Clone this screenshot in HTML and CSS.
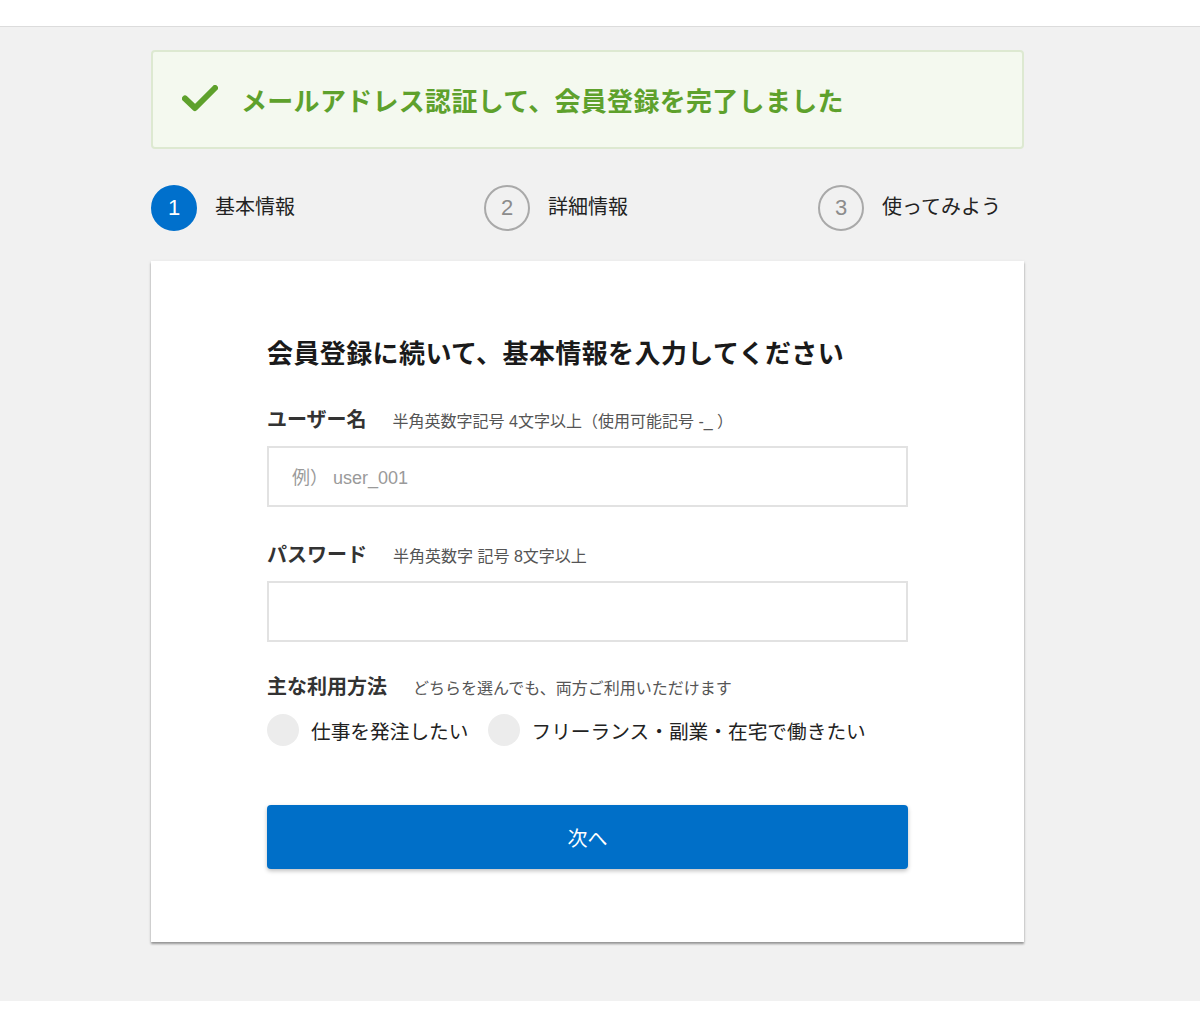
FILE: index.html
```html
<!DOCTYPE html>
<html lang="ja">
<head>
<meta charset="utf-8">
<title>基本情報</title>
<link rel="stylesheet" href="styles.css">
</head>
<body>
<header class="topbar"></header>
<main class="main">
  <div class="wrap">
    <div class="alert">
      <svg class="check" width="36" height="27" viewBox="0 0 36 27" aria-hidden="true">
        <path d="M3 13.5 L13 23 L33 3" fill="none" stroke="#5ea12c" stroke-width="6" stroke-linecap="round" stroke-linejoin="round"/>
      </svg>
      <span class="alert-text">メールアドレス認証して、会員登録を完了しました</span>
    </div>

    <ol class="steps">
      <li class="step active"><span class="num">1</span><span class="step-label">基本情報</span></li>
      <li class="step"><span class="num">2</span><span class="step-label">詳細情報</span></li>
      <li class="step"><span class="num">3</span><span class="step-label">使ってみよう</span></li>
    </ol>

    <section class="card">
      <div class="form">
        <h1 class="title">会員登録に続いて、基本情報を入力してください</h1>

        <div class="field-head first">
          <span class="label">ユーザー名</span>
          <span class="hint">半角英数字記号 4文字以上（使用可能記号 -_ ）</span>
        </div>
        <div class="input"><span class="placeholder">例） user_001</span></div>

        <div class="field-head">
          <span class="label">パスワード</span>
          <span class="hint">半角英数字 記号 8文字以上</span>
        </div>
        <div class="input"></div>

        <div class="field-head third">
          <span class="label">主な利用方法</span>
          <span class="hint">どちらを選んでも、両方ご利用いただけます</span>
        </div>
        <div class="radios">
          <label class="radio"><span class="dot"></span><span>仕事を発注したい</span></label>
          <label class="radio"><span class="dot"></span><span>フリーランス・副業・在宅で働きたい</span></label>
        </div>

        <button class="btn" type="button">次へ</button>
      </div>
    </section>
  </div>
</main>
</body>
</html>
```

FILE: styles.css
```css
* { box-sizing: border-box; }

html, body {
  margin: 0;
  padding: 0;
  background: #fff;
  font-family: "Liberation Sans", "Noto Sans CJK JP", sans-serif;
  color: #333;
}

.topbar {
  height: 27px;
  background: #fff;
  border-bottom: 1px solid #dcdcdc;
  box-shadow: 0 1px 2px rgba(0,0,0,0.05);
}

.main {
  background: #f1f1f1;
  padding: 23px 0 59px;
}

.wrap {
  width: 873px;
  margin-left: 151px;
}

.alert {
  height: 99px;
  display: flex;
  align-items: center;
  gap: 23px;
  padding-left: 29px;
  background: #f4f9ef;
  border: 2px solid #dde9d1;
  border-radius: 4px;
}

.check { flex: none; margin-top: -3px; }

.alert-text {
  font-size: 26px;
  font-weight: 700;
  color: #5ea12c;
  letter-spacing: 0.3px;
}

.steps {
  list-style: none;
  margin: 36px 0 0;
  padding: 0;
  display: grid;
  grid-template-columns: 333px 334px 206px;
}

.step {
  display: flex;
  align-items: center;
  gap: 18px;
}

.num {
  width: 46px;
  height: 46px;
  border-radius: 50%;
  border: 2px solid #a9a9a9;
  display: flex;
  align-items: center;
  justify-content: center;
  font-size: 22px;
  color: #8c8c8c;
  flex: none;
}

.step.active .num {
  background: #0070cc;
  border-color: #0070cc;
  color: #fff;
}

.step-label {
  font-size: 20px;
  line-height: 24px;
  margin-top: -2px;
  color: #222;
}

.card {
  margin-top: 30px;
  background: #fff;
  height: 681px;
  box-shadow: 0 2px 2px rgba(0,0,0,0.35), 0 1px 4px rgba(0,0,0,0.08);
  padding: 75px 116px 0;
}

.title {
  margin: 0;
  font-size: 26px;
  line-height: 36px;
  font-weight: 700;
  color: #1a1a1a;
  letter-spacing: 0.4px;
}

.field-head {
  display: flex;
  align-items: baseline;
  gap: 26px;
  margin-top: 33px;
  line-height: 30px;
}

.field-head.first { margin-top: 33px; }
.field-head.third { margin-top: 30px; }

.label {
  font-size: 20px;
  font-weight: 700;
  color: #333;
}

.hint {
  font-size: 16px;
  color: #555;
}

.input {
  margin-top: 9px;
  height: 61px;
  border: 2px solid #e2e2e2;
  display: flex;
  align-items: center;
  padding-left: 23px;
}

.placeholder {
  font-size: 18px;
  color: #9a9a9a;
  margin-top: -2px;
}

.radios {
  margin-top: 10px;
  display: flex;
  gap: 19px;
}

.radio {
  display: flex;
  align-items: center;
  gap: 12px;
  font-size: 19.7px;
  color: #222;
}

.dot {
  width: 32px;
  height: 32px;
  border-radius: 50%;
  background: #ececec;
  flex: none;
}

.btn {
  display: block;
  margin-top: 59px;
  width: 100%;
  height: 64px;
  border: 0;
  border-radius: 4px;
  background: #006fc8;
  color: #fff;
  font-family: "Liberation Sans", "Noto Sans CJK JP", sans-serif;
  font-size: 20px;
  box-shadow: 0 2px 4px rgba(0,0,0,0.25);
}
```
